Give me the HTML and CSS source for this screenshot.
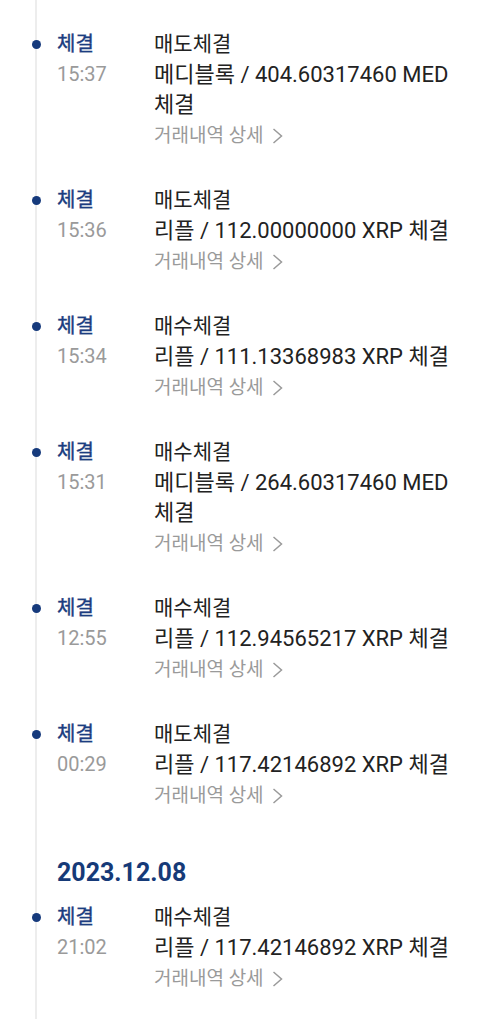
FILE: index.html
```html
<!doctype html>
<html>

<head>
    <title>거래내역</title>
    <meta charset="UTF-8">
    <link rel="stylesheet" href="styles.css">
</head>

<body>
    <div id="page">
        <div class="timeline">
            <div class="entry">
                <div class="left">
                    <p class="state">체결</p>
                    <p class="time">15:37</p>
                </div>
                <div class="right">
                    <p class="kind">매도체결</p>
                    <p class="desc">메디블록 / 404.60317460 MED 체결</p>
                    <a class="detail" href="#">거래내역 상세 <svg width="11" height="16" viewBox="0 0 11 16"><polyline points="1.5,1 9.5,8 1.5,15" /></svg></a>
                </div>
            </div>
            <div class="entry">
                <div class="left">
                    <p class="state">체결</p>
                    <p class="time">15:36</p>
                </div>
                <div class="right">
                    <p class="kind">매도체결</p>
                    <p class="desc">리플 / 112.00000000 XRP 체결</p>
                    <a class="detail" href="#">거래내역 상세 <svg width="11" height="16" viewBox="0 0 11 16"><polyline points="1.5,1 9.5,8 1.5,15" /></svg></a>
                </div>
            </div>
            <div class="entry">
                <div class="left">
                    <p class="state">체결</p>
                    <p class="time">15:34</p>
                </div>
                <div class="right">
                    <p class="kind">매수체결</p>
                    <p class="desc">리플 / 111.13368983 XRP 체결</p>
                    <a class="detail" href="#">거래내역 상세 <svg width="11" height="16" viewBox="0 0 11 16"><polyline points="1.5,1 9.5,8 1.5,15" /></svg></a>
                </div>
            </div>
            <div class="entry">
                <div class="left">
                    <p class="state">체결</p>
                    <p class="time">15:31</p>
                </div>
                <div class="right">
                    <p class="kind">매수체결</p>
                    <p class="desc">메디블록 / 264.60317460 MED 체결</p>
                    <a class="detail" href="#">거래내역 상세 <svg width="11" height="16" viewBox="0 0 11 16"><polyline points="1.5,1 9.5,8 1.5,15" /></svg></a>
                </div>
            </div>
            <div class="entry">
                <div class="left">
                    <p class="state">체결</p>
                    <p class="time">12:55</p>
                </div>
                <div class="right">
                    <p class="kind">매수체결</p>
                    <p class="desc">리플 / 112.94565217 XRP 체결</p>
                    <a class="detail" href="#">거래내역 상세 <svg width="11" height="16" viewBox="0 0 11 16"><polyline points="1.5,1 9.5,8 1.5,15" /></svg></a>
                </div>
            </div>
            <div class="entry">
                <div class="left">
                    <p class="state">체결</p>
                    <p class="time">00:29</p>
                </div>
                <div class="right">
                    <p class="kind">매도체결</p>
                    <p class="desc">리플 / 117.42146892 XRP 체결</p>
                    <a class="detail" href="#">거래내역 상세 <svg width="11" height="16" viewBox="0 0 11 16"><polyline points="1.5,1 9.5,8 1.5,15" /></svg></a>
                </div>
            </div>

            <h3 class="date">2023.12.08</h3>

            <div class="entry">
                <div class="left">
                    <p class="state">체결</p>
                    <p class="time">21:02</p>
                </div>
                <div class="right">
                    <p class="kind">매수체결</p>
                    <p class="desc">리플 / 117.42146892 XRP 체결</p>
                    <a class="detail" href="#">거래내역 상세 <svg width="11" height="16" viewBox="0 0 11 16"><polyline points="1.5,1 9.5,8 1.5,15" /></svg></a>
                </div>
            </div>
        </div>
    </div>
</body>

</html>
```

FILE: styles.css
```css
body {
    margin: 0;
    background-color: white;
    font-family: Roboto, 'Noto Sans CJK KR', sans-serif;
    color: #222;
    word-break: keep-all;
}

p {
    margin: 0;
}

a {
    text-decoration: none;
}

#page {
    border-bottom: 1px solid #cfcfcf;
}

.timeline {
    margin-left: 35px;
    border-left: 2px solid #ededed;
    padding: 28px 34px 25px 20px;
}

.entry {
    display: grid;
    grid-template-columns: 97px 1fr;
    position: relative;
    margin-bottom: 33px;
}

.entry:last-child {
    margin-bottom: 0;
}

/* 타임라인 점 */
.entry::before {
    content: "";
    position: absolute;
    left: -25px;
    top: 12px;
    width: 9px;
    height: 9px;
    border-radius: 50%;
    background-color: #163a7c;
}

.state {
    font-size: 20px;
    line-height: 32px;
    color: #1b3d80;
    -webkit-text-stroke: 0.4px #1b3d80;
}

.time {
    font-size: 20px;
    line-height: 28px;
    color: #9a9a9a;
}

.kind {
    font-size: 21px;
    line-height: 32px;
}

.desc {
    font-size: 22px;
    line-height: 30px;
}

.detail {
    display: flex;
    align-items: center;
    font-size: 19px;
    line-height: 31px;
    color: #9a9a9a;
}

.detail svg {
    margin-left: 8px;
    fill: none;
    stroke: #9a9a9a;
    stroke-width: 1.5;
}

/* 앞 항목의 margin-bottom 과 겹치므로 크게 */
.date {
    margin: 45px 0 11px;
    font-size: 25px;
    font-weight: bold;
    line-height: 34px;
    color: #163a78;
}
```
